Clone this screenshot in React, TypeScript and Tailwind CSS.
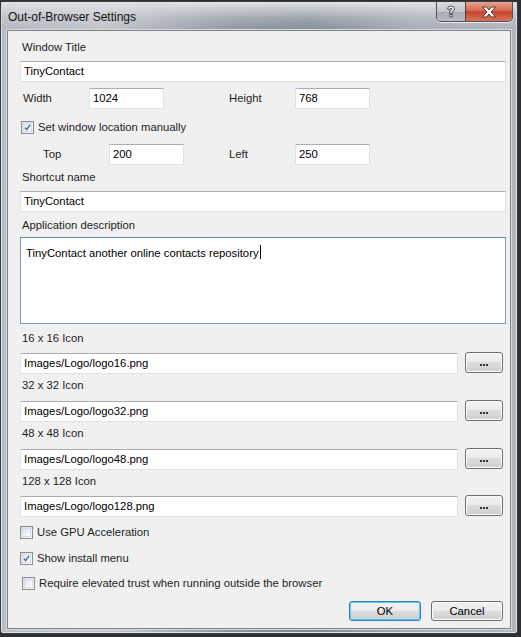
import type { ReactNode } from "react";

const FONT = { fontFamily: '"Liberation Sans", Arial, sans-serif' };

function CheckBox({ checked }: { checked?: boolean }) {
  return (
    <span className="flex h-[13px] w-[13px] shrink-0 items-center justify-center border border-[#8f8f8f] bg-gradient-to-br from-[#dcdcdc] to-[#fbfbfb]">
      <span className="flex h-[9px] w-[9px] items-center justify-center border border-[#d6dbe6] bg-gradient-to-br from-[#dde3ee] to-[#ffffff]">
        {checked ? (
          <svg width="9" height="9" viewBox="0 0 9 9">
            <path
              d="M1.2 4.6 L3.4 7.2 L7.8 1.2"
              fill="none"
              stroke="#4a5f97"
              strokeWidth="1.7"
            />
          </svg>
        ) : null}
      </span>
    </span>
  );
}

function TextBox({ value, className }: { value?: string; className: string }) {
  return (
    <div
      className={`flex h-[21px] items-center border border-[#dfe3e8] border-t-[#abadb3] bg-white pl-[3px] text-[11.3px] text-black ${className}`}
    >
      {value}
    </div>
  );
}

function Label({ children, className = "" }: { children: ReactNode; className?: string }) {
  return (
    <div className={`h-[16px] pl-[2px] text-[11.3px] leading-[16px] text-[#1e1e1e] ${className}`}>
      {children}
    </div>
  );
}

function Button({
  children,
  isDefault,
  className = "",
}: {
  children: ReactNode;
  isDefault?: boolean;
  className?: string;
}) {
  return (
    <div
      className={`flex items-center justify-center rounded-[3px] border text-[11.3px] text-black ${
        isDefault ? "border-[#3c7fb1] shadow-[inset_0_0_0_1px_#48d0fb]" : "border-[#707070] shadow-[inset_0_0_0_1px_#fbfbfb]"
      } bg-[linear-gradient(#f2f2f2_0%,#ebebeb_48%,#dddddd_50%,#cfcfcf_100%)] ${className}`}
    >
      {children}
    </div>
  );
}

function IconRow({ value }: { value: string }) {
  return (
    <div className="flex items-start">
      <TextBox value={value} className="w-[439px]" />
      <Button className="ml-[7px] mt-[-1px] h-[21px] w-[38px]">
        <span className="flex gap-[1px] pt-[4px]">
          <span className="h-[2px] w-[2px] bg-[#3a3030]" />
          <span className="h-[2px] w-[2px] bg-[#3a3030]" />
          <span className="h-[2px] w-[2px] bg-[#3a3030]" />
        </span>
      </Button>
    </div>
  );
}

function CheckRow({ checked, label, className = "" }: { checked?: boolean; label: string; className?: string }) {
  return (
    <div className={`flex h-[16px] items-center gap-[4px] text-[11.3px] text-[#1e1e1e] ${className}`}>
      <CheckBox checked={checked} />
      <span>{label}</span>
    </div>
  );
}

function CaptionButtons() {
  return (
    <div className="flex h-[20px] overflow-hidden rounded-b-[5px] border border-t-0 border-[#4f555c] shadow-[0_1px_0_#e6e8ea]">
      <div className="flex w-[28px] items-center justify-center bg-[linear-gradient(#d8dbdf_0%,#c2c6cb_50%,#a9aeb5_52%,#b7bcc2_100%)]">
        <svg width="12" height="13" viewBox="0 0 12 13">
          <path
            d="M2.5 4 Q2.5 1 6 1 Q9.5 1 9.5 4 Q9.5 5.8 7.2 6.8 L7.2 8.3 L4.8 8.3 L4.8 5.8 Q7 5.2 7 4 Q7 3.2 6 3.2 Q5 3.2 5 4.3 Z M4.8 9.5 H7.2 V12 H4.8 Z"
            fill="#ffffff"
            stroke="#3a3f45"
            strokeWidth="0.9"
          />
        </svg>
      </div>
      <div className="flex w-[47px] items-center justify-center border-l border-[#5c3a35] bg-[linear-gradient(#e7a593_0%,#d4674f_45%,#c3452b_52%,#d9735a_100%)]">
        <svg width="16" height="12" viewBox="0 0 16 12">
          <path
            d="M1.5 1 H5.5 L8 4 L10.5 1 H14.5 L10 6 L14.5 11 H10.5 L8 8 L5.5 11 H1.5 L6 6 Z"
            fill="#ffffff"
            stroke="#4a2a22"
            strokeWidth="0.9"
          />
        </svg>
      </div>
    </div>
  );
}

export default function App() {
  return (
    <div className="h-[637px] w-[521px] overflow-hidden bg-[#2c2f33]" style={FONT}>
      <div className="ml-0 mt-[1px] h-[633px] w-[518px] rounded-t-[7px] rounded-b-[3px] border border-[#3b3f44] bg-[linear-gradient(90deg,#b8bdc3_0%,#c9cdd2_20%,#8c939c_45%,#7f8791_60%,#a7adb4_80%,#b3b8be_100%)] shadow-[inset_0_0_0_1px_#dfe2e5]">
        <div className="flex h-[28px] items-start justify-between bg-[linear-gradient(#dfe2e6_0%,rgba(200,205,211,0.4)_60%,rgba(160,166,174,0.2)_100%)] pl-[7px] pr-[4px]">
          <div className="pt-[7px] text-[12px] leading-[16px] text-[#111]">Out-of-Browser Settings</div>
          <CaptionButtons />
        </div>
        <div className="mx-[6px] h-[599px] border border-[#7c8188] bg-[#f0f0f0] pl-[12px] pr-[7px] shadow-[0_0_0_1px_#d9dcdf]">
          <Label className="mt-[8px]">Window Title</Label>
          <TextBox value="TinyContact" className="mt-[6px] w-[486px]" />

          <div className="mt-[6px] flex h-[21px] items-center">
            <span className="w-[69px] pl-[3px] text-[11.3px] text-[#1e1e1e]">Width</span>
            <TextBox value="1024" className="w-[75px]" />
            <span className="ml-[65px] w-[66px] text-[11.3px] text-[#1e1e1e]">Height</span>
            <TextBox value="768" className="w-[75px]" />
          </div>

          <CheckRow checked label="Set window location manually" className="mt-[10px] pl-[1px]" />

          <div className="mt-[9px] flex h-[21px] items-center">
            <span className="w-[89px] pl-[23px] text-[11.3px] text-[#1e1e1e]">Top</span>
            <TextBox value="200" className="w-[75px]" />
            <span className="ml-[45px] w-[66px] text-[11.3px] text-[#1e1e1e]">Left</span>
            <TextBox value="250" className="w-[75px]" />
          </div>

          <Label className="mt-[4px]">Shortcut name</Label>
          <TextBox value="TinyContact" className="mt-[6px] w-[486px]" />

          <Label className="mt-[5px]">Application description</Label>
          <div className="mt-[4px] h-[87px] w-[486px] border border-[#7d9ab8] border-t-[#5c86b0] bg-white pl-[5px] pt-[5px] text-[11.3px] leading-[16px] text-black">
            TinyContact another online contacts repository
            <span className="ml-[1px] inline-block h-[14px] w-[1px] translate-y-[2px] bg-black" />
          </div>

          <Label className="mt-[6px]">16 x 16 Icon</Label>
          <div className="mt-[7px]">
            <IconRow value="Images/Logo/logo16.png" />
          </div>
          <Label className="mt-[3px]">32 x 32 Icon</Label>
          <div className="mt-[8px]">
            <IconRow value="Images/Logo/logo32.png" />
          </div>
          <Label className="mt-[3px]">48 x 48 Icon</Label>
          <div className="mt-[8px]">
            <IconRow value="Images/Logo/logo48.png" />
          </div>
          <Label className="mt-[3px]">128 x 128 Icon</Label>
          <div className="mt-[7px]">
            <IconRow value="Images/Logo/logo128.png" />
          </div>

          <CheckRow label="Use GPU Acceleration" className="mt-[7px]" />
          <CheckRow checked label="Show install menu" className="mt-[10px]" />
          <CheckRow
            label="Require elevated trust when running outside the browser"
            className="mt-[9px] pl-[2px]"
          />

          <div className="mt-[10px] flex justify-end gap-[10px] pr-0">
            <Button isDefault className="h-[20px] w-[72px]">
              OK
            </Button>
            <Button className="h-[20px] w-[72px]">Cancel</Button>
          </div>
        </div>
      </div>
    </div>
  );
}
